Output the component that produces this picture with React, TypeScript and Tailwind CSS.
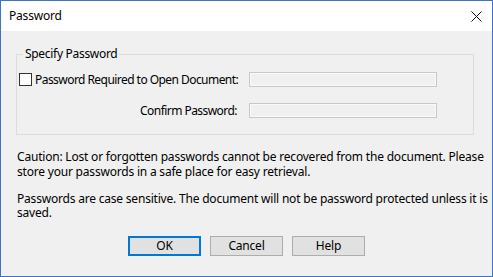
import React from "react";

const font = { fontFamily: "'Noto Sans', 'Open Sans', 'Liberation Sans', sans-serif" };

const TextBox = () => (
  <div className="w-[188px] h-[15px] border border-[#c8c8c8] bg-[#f0f0f0] shadow-[inset_0_0_0_1px_#fafafa]" />
);

const DialogButton = ({ label, primary }: { label: string; primary?: boolean }) => (
  <button
    className={
      "w-[73px] h-[20px] bg-[#e1e1e1] text-[12px] text-black flex items-center justify-center leading-none " +
      (primary ? "border-2 border-[#0078d7]" : "border border-[#adadad]")
    }
  >
    {label}
  </button>
);

export default function App() {
  return (
    <div
      style={font}
      className="w-[493px] h-[277px] border border-[#3b73c5] bg-[#f0f0f0] flex flex-col text-[12px] text-black tracking-[-0.2px]"
    >
      <div className="h-[30px] bg-white flex items-center justify-between pl-[8px] pr-[10px]">
        <span className="text-[12px]">Password</span>
        <svg width="11" height="11" viewBox="0 0 11 11">
          <path d="M0.5 0.5 L10.5 10.5 M10.5 0.5 L0.5 10.5" stroke="#111" strokeWidth="1" />
        </svg>
      </div>

      <div className="flex flex-col px-[15px] pt-[14px] flex-1">
        <fieldset className="border border-[#dcdcdc] h-[90px] w-[458px]">
          <legend className="ml-[6px] px-[2px] leading-[18px] tracking-[-0.3px]">Specify Password</legend>
          <div className="grid grid-cols-[232px_188px] gap-y-[16px] mt-[9px] items-center whitespace-nowrap tracking-[-0.55px]">
            <label className="flex items-center pl-[2px] h-[15px]">
              <span className="w-[13px] h-[13px] border border-[#333] bg-white shrink-0" />
              <span className="ml-[3px]">Password Required to Open Document:</span>
            </label>
            <TextBox />
            <span className="text-right pr-[12px] leading-[15px]">Confirm Password:</span>
            <TextBox />
          </div>
        </fieldset>

        <p className="mt-[14px] pl-[1px] leading-[15px] whitespace-nowrap">
          Caution: Lost or forgotten passwords cannot be recovered from the document. Please
          <br />
          store your passwords in a safe place for easy retrieval.
        </p>
        <p className="mt-[13px] pl-[1px] leading-[14px] whitespace-nowrap">
          Passwords are case sensitive. The document will not be password protected unless it is
          <br />
          saved.
        </p>

        <div className="flex justify-center gap-[9px] mt-[16px]">
          <DialogButton label="OK" primary />
          <DialogButton label="Cancel" />
          <DialogButton label="Help" />
        </div>
      </div>
    </div>
  );
}
